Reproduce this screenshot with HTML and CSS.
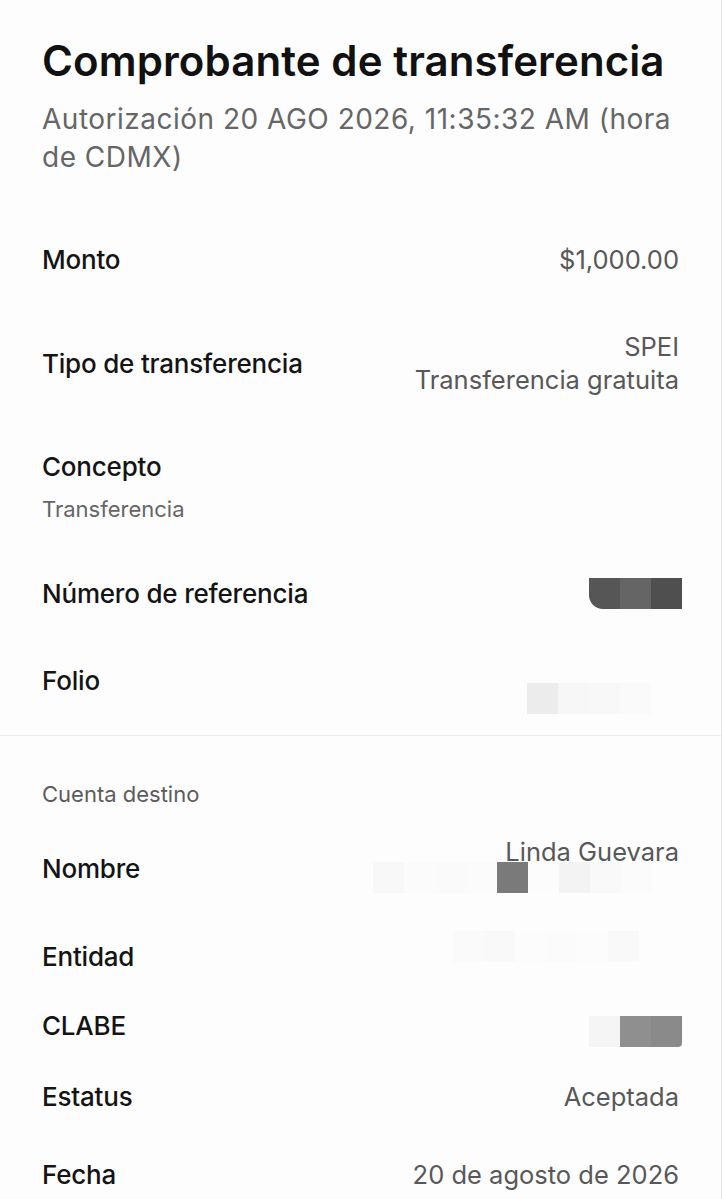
FILE: index.html
```html
<!DOCTYPE html>
<html lang="es">
    <head>
        <meta charset="utf-8">
        <meta name="viewport" content="width=device-width, initial-scale=1">
        <title>Comprobante de transferencia</title>
        <link rel="stylesheet" href="styles.css">
    </head>
    <body>
        <main class="receipt">
            <header class="receipt-head">
                <h1>Comprobante de transferencia</h1>
                <p class="auth">Autorización 20 AGO 2026, 11:35:32 AM (hora de CDMX)</p>
            </header>

            <section class="details">
                <div class="row">
                    <span class="label">Monto</span>
                    <div class="value">$1,000.00</div>
                </div>
                <div class="row">
                    <span class="label">Tipo de transferencia</span>
                    <div class="value">SPEI<br>Transferencia gratuita</div>
                </div>
                <div class="row row--stack">
                    <span class="label">Concepto</span>
                    <span class="note">Transferencia</span>
                </div>
                <div class="row">
                    <span class="label">Número de referencia</span>
                    <div class="mask">
                        <i class="px px--cut" style="background:#565656"></i>
                        <i class="px" style="background:#656565"></i>
                        <i class="px" style="background:#4f4f4f"></i>
                    </div>
                </div>
                <div class="row">
                    <span class="label">Folio</span>
                    <div class="mask mask--folio">
                        <i class="px" style="background:#ececec"></i>
                        <i class="px" style="background:#f7f7f7"></i>
                        <i class="px" style="background:#f8f8f8"></i>
                        <i class="px" style="background:#fafafa"></i>
                    </div>
                </div>
            </section>

            <section class="details details--dest">
                <h2 class="section-title">Cuenta destino</h2>
                <div class="row row--short row--name">
                    <span class="label">Nombre</span>
                    <div class="value">
                        Linda Guevara
                        <div class="mask mask--name">
                            <i class="px" style="background:#f8f8f8"></i>
                            <i class="px" style="background:#fbfbfb"></i>
                            <i class="px" style="background:#fafafa"></i>
                            <i class="px" style="background:#fbfbfb"></i>
                            <i class="px" style="background:#7a7a7a"></i>
                            <i class="px" style="background:#fcfcfc"></i>
                            <i class="px" style="background:#f3f3f3"></i>
                            <i class="px" style="background:#f9f9f9"></i>
                            <i class="px" style="background:#fbfbfb"></i>
                        </div>
                    </div>
                </div>
                <div class="row row--short">
                    <span class="label">Entidad</span>
                    <div class="mask mask--faint">
                        <i class="px" style="background:#fafafa"></i>
                        <i class="px" style="background:#f9f9f9"></i>
                        <i class="px" style="background:#fcfcfc"></i>
                        <i class="px" style="background:#fbfbfb"></i>
                        <i class="px" style="background:#fcfcfc"></i>
                        <i class="px" style="background:#f9f9f9"></i>
                    </div>
                </div>
                <div class="row row--short">
                    <span class="label">CLABE</span>
                    <div class="mask mask--clabe">
                        <i class="px" style="background:#f5f5f5"></i>
                        <i class="px" style="background:#8f8f8f"></i>
                        <i class="px px--cut-r" style="background:#8a8a8a"></i>
                    </div>
                </div>
                <div class="row row--short row--status">
                    <span class="label">Estatus</span>
                    <div class="value">Aceptada</div>
                </div>
                <div class="row row--short row--last">
                    <span class="label">Fecha</span>
                    <div class="value">20 de agosto de 2026</div>
                </div>
            </section>
        </main>
    </body>
</html>
```

FILE: styles.css
```css
body {
    margin: 0px;
    background-color: #fdfdfd;
    font-family: Inter, "Liberation Sans", sans-serif;
    color: #141414;
}

.receipt {
    border-right: 1px solid #e4e4e4;
    min-height: 1199px;
    box-sizing: border-box;
}

.receipt-head {
    padding: 36px 42px 0px 42px;
}

h1 {
    margin: 0px;
    font-size: 42px;
    font-weight: 600;
    line-height: 50px;
    letter-spacing: 0.1px;
    color: #111;
}

.auth {
    margin: 14px 0px 0px 0px;
    font-size: 28px;
    font-weight: 400;
    line-height: 38px;
    letter-spacing: 0.5px;
    color: #666;
}

.details {
    padding: 40px 42px 11px 42px;
}

.details--dest {
    border-top: 1px solid #ececec;
    padding-top: 44px;
}

.row {
    display: flex;
    justify-content: space-between;
    align-items: center;
    padding: 27px 0px;
    min-height: 33px;
}

.row--stack {
    flex-direction: column;
    align-items: flex-start;
    gap: 12px;
}

.row--short {
    padding: 18px 0px;
}

.row--name {
    margin-top: 9px;
    padding-bottom: 29px;
}

.row--name .label {
    margin-top: 8px;
}

.row--status {
    padding-top: 20px;
}

.row--last {
    padding-top: 27px;
}

.label {
    font-size: 26px;
    font-weight: 500;
    letter-spacing: -0.2px;
    line-height: 33px;
}

.value {
    text-align: right;
    font-size: 25.5px;
    font-weight: 400;
    line-height: 33px;
    color: #585858;
}

.note {
    font-size: 22px;
    font-weight: 400;
    line-height: 28px;
    color: #666;
}

.section-title {
    margin: 0px;
    font-size: 22px;
    font-weight: 400;
    line-height: 28px;
    color: #5c5c5c;
}

.mask {
    display: flex;
    margin-right: -3px;
}

.mask--folio {
    margin: 18px 28px -18px 0px;
}

.mask--name {
    justify-content: flex-end;
    margin-top: -6px;
    margin-right: 27px;
}

.mask--faint {
    margin: -10px 40px 10px 0px;
}

.mask--clabe {
    margin-top: 6px;
    margin-bottom: -6px;
}

.px {
    display: block;
    width: 31px;
    height: 31px;
}

.px--cut {
    border-bottom-left-radius: 14px;
}

.px--cut-r {
    border-bottom-right-radius: 4px;
}
```
